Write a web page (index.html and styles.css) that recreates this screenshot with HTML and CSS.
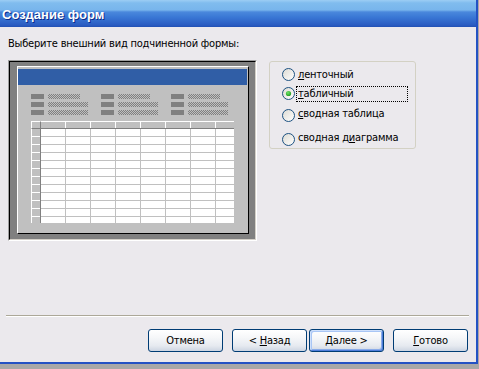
FILE: index.html
```html
<!DOCTYPE html>
<html lang="ru">
<head>
<meta charset="utf-8">
<title>Создание форм</title>
<link rel="stylesheet" href="styles.css">
</head>
<body>
<div class="window">
  <div class="titlebar"><span class="title">Создание форм</span></div>
  <div class="content">
    <p class="prompt">Выберите внешний вид подчиненной формы:</p>
    <div class="main">
      <div class="frame">
        <div class="frame-in">
          <div class="panel">
            <div class="caption"></div>
            <div class="labels">
              <div class="lgroup">
                <div class="lrow"><span class="lbox"></span><span class="hatch short"></span></div>
                <div class="lrow"><span class="lbox"></span><span class="hatch"></span></div>
                <div class="lrow"><span class="lbox"></span><span class="hatch"></span></div>
              </div>
              <div class="lgroup">
                <div class="lrow"><span class="lbox"></span><span class="hatch short"></span></div>
                <div class="lrow"><span class="lbox"></span><span class="hatch"></span></div>
                <div class="lrow"><span class="lbox"></span><span class="hatch"></span></div>
              </div>
              <div class="lgroup">
                <div class="lrow"><span class="lbox"></span><span class="hatch short"></span></div>
                <div class="lrow"><span class="lbox"></span><span class="hatch"></span></div>
                <div class="lrow"><span class="lbox"></span><span class="hatch"></span></div>
              </div>
            </div>
            <div class="grid">
              <div class="corner"></div>
              <div class="hdr"></div>
              <div class="sel"></div>
              <div class="cells"></div>
            </div>
          </div>
        </div>
      </div>
      <div class="group">
        <div class="opt">
          <svg class="radio" width="13" height="13" viewBox="0 0 13 13"><defs><linearGradient id="rg1" x1="0" y1="0" x2="1" y2="1"><stop offset="0" stop-color="#dcdad2"/><stop offset="1" stop-color="#ffffff"/></linearGradient></defs><circle cx="6.5" cy="6.5" r="6" fill="url(#rg1)" stroke="#1c5180" stroke-width="1"/></svg>
          <span class="olabel"><u>л</u>енточный</span>
        </div>
        <div class="opt opt2">
          <svg class="radio" width="13" height="13" viewBox="0 0 13 13"><defs><linearGradient id="rg2" x1="0" y1="0" x2="1" y2="1"><stop offset="0" stop-color="#dcdad2"/><stop offset="1" stop-color="#ffffff"/></linearGradient><radialGradient id="dot" cx="0.4" cy="0.35" r="0.7"><stop offset="0" stop-color="#6ee36a"/><stop offset="1" stop-color="#1f9a1f"/></radialGradient></defs><circle cx="6.5" cy="6.5" r="6" fill="url(#rg2)" stroke="#1c5180" stroke-width="1"/><circle cx="6.5" cy="6.5" r="2.6" fill="url(#dot)"/></svg>
          <span class="olabel focus"><u>т</u>абличный</span>
        </div>
        <div class="opt opt3">
          <svg class="radio" width="13" height="13" viewBox="0 0 13 13"><defs><linearGradient id="rg3" x1="0" y1="0" x2="1" y2="1"><stop offset="0" stop-color="#dcdad2"/><stop offset="1" stop-color="#ffffff"/></linearGradient></defs><circle cx="6.5" cy="6.5" r="6" fill="url(#rg3)" stroke="#1c5180" stroke-width="1"/></svg>
          <span class="olabel hi"><u>с</u>водная таблица</span>
        </div>
        <div class="opt opt4">
          <svg class="radio" width="13" height="13" viewBox="0 0 13 13"><defs><linearGradient id="rg4" x1="0" y1="0" x2="1" y2="1"><stop offset="0" stop-color="#dcdad2"/><stop offset="1" stop-color="#ffffff"/></linearGradient></defs><circle cx="6.5" cy="6.5" r="6" fill="url(#rg4)" stroke="#1c5180" stroke-width="1"/></svg>
          <span class="olabel hi">сводная д<u>и</u>аграмма</span>
        </div>
      </div>
    </div>
  </div>
  <div class="footer">
    <div class="sep"></div>
    <div class="buttons">
      <button class="btn">Отмена</button>
      <button class="btn">&lt; <u>Н</u>азад</button>
      <button class="btn default"><u>Д</u>алее &gt;</button>
      <button class="btn"><u>Г</u>отово</button>
    </div>
  </div>
</div>
</body>
</html>
```

FILE: styles.css
```css
html, body {
  margin: 0;
  padding: 0;
}
body {
  background: #a8a8a8;
  font-family: "DejaVu Sans", sans-serif;
  font-stretch: condensed;
  font-size: 11px;
  letter-spacing: -0.2px;
  color: #000;
  width: 479px;
  height: 369px;
  overflow: hidden;
}
.window {
  width: 476px;
  height: 362px;
  border-right: 2px solid #2452c4;
  border-bottom: 2px solid #2452c4;
  background: #ebe9ed;
  display: flex;
  flex-direction: column;
}
.titlebar {
  height: 27px;
  box-sizing: border-box;
  padding: 7px 0 0 2px;
  background: linear-gradient(180deg, #9ccdf4 0px, #80bcee 3px, #78b5ec 10px, #4a88dc 12px, #3a78d5 17px, #2a5cc2 25px, #2150b4 27px);
}
.title {
  display: block;
  color: #fff;
  font-family: "Liberation Sans", sans-serif;
  font-stretch: normal;
  font-weight: bold;
  font-size: 13px;
  line-height: 15px;
  letter-spacing: 0;
  text-shadow: 1px 1px 0 #0c2a8a;
}
.content {
  flex: 1;
  padding: 10px 0 0 0;
}
.prompt {
  margin: 0 0 10px 8px;
  line-height: 13px;
}
.main {
  display: flex;
  align-items: flex-start;
  padding-left: 8px;
}
.frame {
  border-top: 1px solid #a0a0a0;
  border-left: 1px solid #a0a0a0;
  border-right: 1px solid #ffffff;
  border-bottom: 1px solid #ffffff;
}
.frame-in {
  border-top: 1px solid #000;
  border-left: 1px solid #000;
  border-right: 1px solid #d4d0c8;
  border-bottom: 1px solid #d4d0c8;
  background: #808080;
  padding: 4px 6px 5px 7px;
}
.panel {
  width: 230px;
  border-top: 1px solid #fff;
  border-left: 1px solid #fff;
  border-right: 1px solid #000;
  border-bottom: 1px solid #000;
  background: #c0c0c0;
  padding: 2px 0 10px 0;
}
.caption {
  height: 16px;
  margin-right: 1px;
  background: #305ea6;
}
.labels {
  display: flex;
  gap: 13px;
  margin: 9px 0 0 13px;
}
.lgroup {
  display: flex;
  flex-direction: column;
  gap: 3px;
}
.lrow {
  display: flex;
  gap: 4px;
  height: 5px;
}
.lbox {
  width: 13px;
  background: #808080;
}
.hatch {
  width: 40px;
  background: repeating-conic-gradient(#808080 0 25%, #c0c0c0 0 50%) 0 0 / 2px 2px;
}
.hatch.short {
  width: 32px;
}
.grid {
  margin: 6px 0 0 13px;
  width: 203px;
  height: 102px;
  display: grid;
  grid-template-columns: 10px 1fr;
  grid-template-rows: 8px 1fr;
}
.corner {
  box-sizing: border-box;
  background: #c0c0c0;
  border-top: 1px solid #fff;
  border-left: 1px solid #fff;
  border-right: 1px solid #808080;
  border-bottom: 1px solid #808080;
}
.hdr {
  box-sizing: border-box;
  border-top: 1px solid #fff;
  border-bottom: 1px solid #808080;
  background: repeating-linear-gradient(90deg, #c0c0c0 0 24px, #ffffff 24px 25px);
}
.sel {
  box-sizing: border-box;
  border-left: 1px solid #fff;
  border-right: 1px solid #808080;
  background: repeating-linear-gradient(180deg, #c0c0c0 0 7px, #ffffff 7px 8px);
}
.cells {
  background:
    repeating-linear-gradient(90deg, transparent 0 24px, #c0c0c0 24px 25px),
    repeating-linear-gradient(180deg, transparent 0 7px, #c0c0c0 7px 8px),
    #ffffff;
}
.group {
  box-sizing: border-box;
  width: 147px;
  height: 88px;
  margin: 1px 0 0 12px;
  border: 1px solid #d3d1c4;
  border-radius: 3px;
  padding: 6px 0 0 12px;
}
.opt {
  display: flex;
  align-items: center;
  height: 13px;
}
.opt2 { margin-top: 6px; }
.opt3 { margin-top: 9px; }
.opt4 { margin-top: 11px; }
.radio {
  flex: none;
  display: block;
}
.olabel {
  display: block;
  box-sizing: border-box;
  height: 16px;
  line-height: 14px;
  margin-left: 1px;
  padding-left: 1px;
  border: 1px solid transparent;
  white-space: nowrap;
}
.olabel.focus {
  width: 112px;
  border: 1px dotted #000;
}
.olabel.hi {
  margin-bottom: 3px;
}
.footer {
  display: flex;
  flex-direction: column;
}
.sep {
  margin: 0 7px 0 6px;
  border-top: 1px solid #aca899;
  border-bottom: 1px solid #ffffff;
}
.buttons {
  display: flex;
  justify-content: flex-end;
  padding: 12px 8px 10px 0;
}
.btn {
  width: 75px;
  height: 23px;
  box-sizing: border-box;
  margin: 0 0 0 9px;
  padding: 0;
  border: 1px solid #003c74;
  border-radius: 3px;
  background: linear-gradient(180deg, #ffffff 0%, #f6f7f9 35%, #e6eaf0 75%, #cdd5e2 100%);
  font-family: "DejaVu Sans", sans-serif;
  font-stretch: condensed;
  font-size: 11px;
  letter-spacing: -0.2px;
  color: #000;
  line-height: 21px;
}
.btn.default {
  margin-left: 2px;
  box-shadow: inset 1px 1px 0 #cfe0fb, inset -1px -1px 0 #4f7ddb, inset 2px 2px 0 #a9c6f5, inset -2px -2px 0 #8bace9;
}
```
